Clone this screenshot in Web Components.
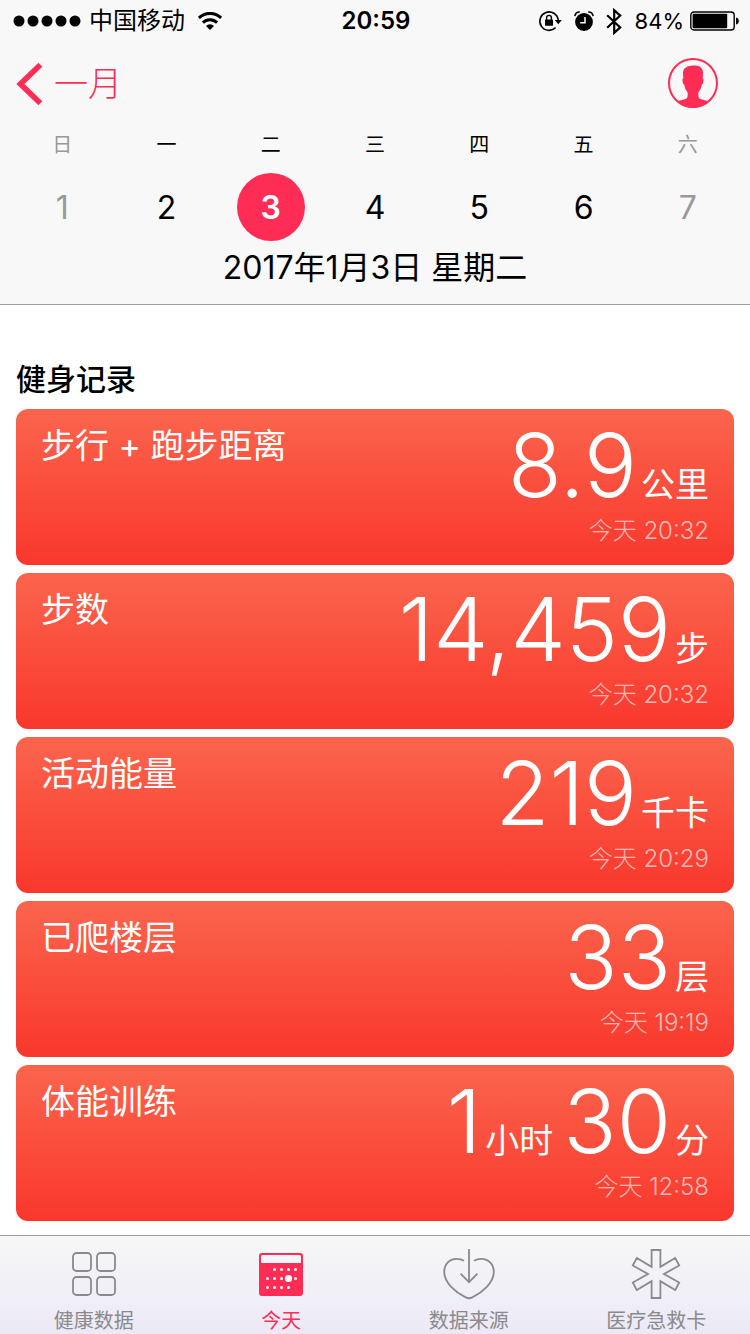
<!DOCTYPE html>
<html lang="zh-CN">
<head>
<meta charset="utf-8">
<meta name="viewport" content="width=device-width, initial-scale=1">
<title>健康</title>
<style>
  :root {
    --pink: #ff2d55;
    --grey: #8a8a8d;
    --bar: #f8f8f8;
    --line: #a0a0a2;
  }
  body {
    margin: 0;
    background: #fff;
    color: #000;
    font-family: Inter, "Noto Sans CJK SC", sans-serif;
  }
</style>
</head>
<body>
<health-app></health-app>

<script>
class StatusBar extends HTMLElement {
  constructor() {
    super();
    this.attachShadow({ mode: "open" });
    this.shadowRoot.innerHTML = `
      <style>
        :host {
          display: grid;
          grid-template-columns: 1fr auto 1fr;
          align-items: center;
          box-sizing: border-box;
          height: 40px;
          padding: 2px 11px 0 13px;
          font-size: 24px;
          line-height: 38px;
        }
        div { display: flex; align-items: center; }
        svg { display: block; flex: none; }
        .carrier { margin: 0 13px 0 8px; }
        .time { font-weight: 600; }
        .right { justify-content: flex-end; }
        .alarm { margin: 0 12px 0 11px; }
        .percent { margin: 0 6px 0 13px; font-size: 22px; }
      </style>
      <div>
        <svg width="68" height="12" viewBox="0 0 68 12">
          <circle cx="6" cy="6" r="5.5"/><circle cx="20" cy="6" r="5.5"/><circle cx="34" cy="6" r="5.5"/>
          <circle cx="48" cy="6" r="5.5"/><circle cx="62" cy="6" r="5.5"/>
        </svg>
        <span class="carrier">中国移动</span>
        <svg width="24" height="18" viewBox="0 0 24 18" fill="none" stroke="#000" stroke-width="3">
          <path d="M.9 6a15.700 15.700 0 0 1 22.200 0"/>
          <path d="M4.900 10.600a10 10 0 0 1 14.200 0"/>
          <path d="M12 18l-4-4.100a5.800 5.800 0 0 1 8 0z" fill="#000" stroke="none"/>
        </svg>
      </div>
      <span class="time">20:59</span>
      <div class="right">
        <svg width="25" height="22" viewBox="0 0 25 22">
          <path d="M17.6 17.6A9.2 9.2 0 1 1 20.2 10" fill="none" stroke="#000" stroke-width="1.6"/>
          <path d="M16.8 10h7l-3.5 4.2z"/>
          <rect x="7" y="9.6" width="8" height="6.2" rx=".6"/>
          <path d="M8.6 10V7.8a2.4 2.4 0 0 1 4.8 0V10" fill="none" stroke="#000" stroke-width="1.4"/>
        </svg>
        <svg class="alarm" width="20" height="22" viewBox="0 0 20 22">
          <circle cx="10" cy="12" r="8.9"/>
          <path d="M.9 6.2C1.2 3.4 3 1.9 5.8 2M19.1 6.2C18.8 3.4 17 1.9 14.2 2" fill="none" stroke="#000" stroke-width="1.6"/>
          <path d="M11 7v5.800H6.200" fill="none" stroke="#fff" stroke-width="1.500"/>
        </svg>
        <svg width="16" height="27" viewBox="0 0 16 27" fill="none" stroke="#000" stroke-width="2.200">
          <path d="M1.200 7.200l13 12.200-6 5.400V2.200l6 5.400-13 12.200"/>
        </svg>
        <span class="percent">84%</span>
        <svg width="49" height="20" viewBox="0 0 49 20">
          <rect x=".8" y="1" width="43.4" height="18" rx="3.2" fill="none" stroke="#000" stroke-width="1.4"/>
          <rect x="2.6" y="2.8" width="34.6" height="14.4" rx="1"/>
          <path d="M46 6.4c2 .4 2.8 1.8 2.8 3.6s-.8 3.2-2.8 3.6z"/>
        </svg>
      </div>
    `;
  }
}

class NavBar extends HTMLElement {
  constructor() {
    super();
    this.attachShadow({ mode: "open" });
    this.shadowRoot.innerHTML = `
      <style>
        :host {
          display: flex;
          justify-content: space-between;
          align-items: center;
          height: 88px;
          padding: 0 31px 0 16px;
        }
        button {
          display: flex;
          align-items: center;
          gap: 11px;
          padding: 0;
          border: 0;
          background: none;
          color: var(--pink);
          font: inherit;
          font-size: 34px;
          font-weight: 300;
          line-height: 46px;
          cursor: pointer;
        }
        svg { display: block; }
      </style>
      <button type="button">
        <svg width="27" height="44" viewBox="0 0 27 44" fill="none" stroke="currentColor" stroke-width="5.600">
          <path d="M24.400 2.800L4.400 22l20 19.200"/>
        </svg>
        <slot></slot>
      </button>
      <button type="button" aria-label="个人资料">
        <svg width="52" height="52" viewBox="0 0 52 52">
          <circle cx="26" cy="25" r="24" fill="none" stroke="currentColor" stroke-width="2"/>
          <path fill="currentColor" d="M26 7.500c5.500-.2 9.800 1.500 10 7 .1 2-.2 4-.3 6 1 .2 1 1.500.7 3-.3 1.700-.9 3-1.700 3.200-.4 3.300-1.400 5.300-3.200 7.500-.3 2.400-.3 4.300.5 5.800 1.300 1.800 6.500 2 9.900 3.500C38 47.500 32 50 26 50s-12-2.500-15.900-6.500c3.400-1.500 8.600-1.700 9.900-3.500.8-1.500.8-3.400.5-5.800-1.800-2.200-2.800-4.200-3.200-7.500-.8-.2-1.400-1.500-1.700-3.200-.3-1.500-.3-2.800.7-3-.1-2-.4-4-.3-6 .2-4.500 4.500-6.800 10-7z"/>
        </svg>
      </button>
    `;
  }
}

class WeekStrip extends HTMLElement {
  constructor() {
    super();
    this.attachShadow({ mode: "open" });
  }

  connectedCallback() {
    const names = ["日", "一", "二", "三", "四", "五", "六"];
    const selected = Number(this.getAttribute("selected"));
    const days = names.map((name, i) => {
      const weekend = i === 0 || i === 6 ? "weekend" : "";
      const current = i + 1 === selected ? `aria-current="date"` : "";
      return `
        <div class="day ${weekend}">
          <span>${name}</span>
          <button type="button" ${current}>${i + 1}</button>
        </div>`;
    }).join("");

    this.shadowRoot.innerHTML = `
      <style>
        :host { display: block; }
        .week {
          display: grid;
          grid-template-columns: repeat(7, 1fr);
          padding: 1px 10px 0;
        }
        .day {
          display: flex;
          flex-direction: column;
          align-items: center;
          gap: 12px;
          font-size: 20px;
          line-height: 32px;
        }
        .weekend { color: #999; }
        button {
          width: 68px;
          height: 68px;
          padding: 2px 0 0;
          border: 0;
          border-radius: 50%;
          background: none;
          color: inherit;
          font: inherit;
          font-size: 32px;
          cursor: pointer;
        }
        button[aria-current] {
          background: var(--pink);
          color: #fff;
          font-weight: 600;
        }
        p {
          margin: 0;
          padding: 5px 0 14px;
          font-size: 32px;
          line-height: 44px;
          text-align: center;
        }
      </style>
      <div class="week">${days}</div>
      <p><slot></slot></p>
    `;
  }
}

class MetricFigure extends HTMLElement {
  constructor() {
    super();
    this.attachShadow({ mode: "open" });
  }

  connectedCallback() {
    this.shadowRoot.innerHTML = `
      <style>
        :host {
          display: flex;
          align-items: baseline;
          gap: 4px;
        }
        .number {
          font-size: 88px;
          font-weight: 300;
          line-height: 88px;
        }
        .unit {
          font-size: 34px;
          line-height: 34px;
        }
      </style>
      <span class="number"><slot></slot></span>
      <span class="unit">${this.getAttribute("unit")}</span>
    `;
  }
}

class MetricCard extends HTMLElement {
  constructor() {
    super();
    this.attachShadow({ mode: "open" });
  }

  connectedCallback() {
    this.shadowRoot.innerHTML = `
      <style>
        :host {
          display: flex;
          justify-content: space-between;
          padding: 12px 25px;
          border-radius: 12px;
          background: linear-gradient(#fb654d, #f9372d);
          color: #fff;
        }
        h3 {
          margin: 0;
          font-size: 34px;
          font-weight: 400;
          line-height: 50px;
        }
        .reading {
          display: flex;
          flex-direction: column;
          align-items: flex-end;
        }
        .figures { display: flex; gap: 10px; }
        time {
          color: rgba(255, 255, 255, 0.65);
          font-size: 24px;
          font-weight: 300;
          line-height: 44px;
        }
      </style>
      <h3>${this.getAttribute("label")}</h3>
      <div class="reading">
        <div class="figures"><slot></slot></div>
        <time>${this.getAttribute("time")}</time>
      </div>
    `;
  }
}

class TabItem extends HTMLElement {
  constructor() {
    super();
    this.attachShadow({ mode: "open" });
  }

  connectedCallback() {
    this.shadowRoot.innerHTML = `
      <style>
        :host { display: block; color: var(--grey); }
        :host([active]) { color: var(--pink); }
        a {
          display: flex;
          flex-direction: column;
          align-items: center;
          gap: 11px;
          color: inherit;
          font-size: 20px;
          line-height: 20px;
          text-decoration: none;
        }
        svg { display: block; }
      </style>
      <a href="#${this.getAttribute("icon")}">
        <svg width="52" height="52" viewBox="0 0 52 52" fill="none" stroke="currentColor" stroke-width="1.8">
          ${TabItem.icons[this.getAttribute("icon")]}
        </svg>
        <slot></slot>
      </a>
    `;
  }
}

TabItem.icons = {
  data: `
    <rect x="5" y="5" width="18" height="18" rx="3.500"/>
    <rect x="29" y="5" width="18" height="18" rx="3.500"/>
    <rect x="5" y="29" width="18" height="18" rx="3.500"/>
    <rect x="29" y="29" width="18" height="18" rx="3.500"/>`,
  today: `
    <path fill="currentColor" stroke="none" fill-rule="evenodd" d="M7 5h38a3 3 0 0 1 3 3v37a3 3 0 0 1-3 3H7a3 3 0 0 1-3-3V8a3 3 0 0 1 3-3zM6 8.500V15h40V8.500A1.500 1.500 0 0 0 44.500 7h-37A1.500 1.500 0 0 0 6 8.500z"/>
    <g fill="#fff" stroke="none">
      <circle cx="19.500" cy="21.500" r="1.500"/><circle cx="26.500" cy="21.500" r="1.500"/><circle cx="33.500" cy="21.500" r="1.500"/><circle cx="40.500" cy="21.500" r="1.500"/>
      <circle cx="12.500" cy="30.500" r="1.500"/><circle cx="19.500" cy="30.500" r="1.500"/><circle cx="26.500" cy="30.500" r="1.500"/><circle cx="33.500" cy="30.500" r="3.600"/><circle cx="40.500" cy="30.500" r="1.500"/>
      <circle cx="12.500" cy="39.500" r="1.500"/><circle cx="19.500" cy="39.500" r="1.500"/><circle cx="26.500" cy="39.500" r="1.500"/><circle cx="33.500" cy="39.500" r="1.500"/>
    </g>`,
  sources: `
    <path d="M21 12.800C18.500 11.200 16 10.800 13.800 10.800 6 10.800 1.200 16.800 1.200 24c0 10.500 11.500 20.500 21.500 25.400 2.400 1.200 4.200 1.200 6.600 0C39.300 44.500 50.800 34.500 50.800 24c0-7.200-4.800-13.200-12.600-13.200-2.200 0-4.700.4-7.200 2"/>
    <path d="M26 1v33M17.600 25.600L26 34.200l8.400-8.600"/>`,
  medical: `
    <path d="M21.600 2h8.800v16.800l14.800-8.900 4 7.600L34 26l15.200 8.500-4 7.600-14.800-8.900V50h-8.800V33.200L6.800 42.100l-4-7.600L18 26 2.800 17.500l4-7.600 14.800 8.900z"/>`
};

class HealthApp extends HTMLElement {
  constructor() {
    super();
    this.attachShadow({ mode: "open" });
    this.shadowRoot.innerHTML = `
      <style>
        :host {
          display: flex;
          flex-direction: column;
          min-height: 100vh;
        }
        header {
          border-bottom: 1px solid var(--line);
          background: var(--bar);
        }
        main {
          flex: 1;
          display: flex;
          flex-direction: column;
          gap: 8px;
          padding: 52px 16px 14px;
        }
        h2 {
          margin: 0;
          font-size: 30px;
          font-weight: 500;
          line-height: 44px;
        }
        nav {
          display: grid;
          grid-template-columns: repeat(4, 1fr);
          padding: 12px 0 3px;
          border-top: 1px solid var(--line);
          background: linear-gradient(#f7f7f8, #ece9f6);
        }
      </style>
      <header>
        <status-bar></status-bar>
        <nav-bar>一月</nav-bar>
        <week-strip selected="3">2017年1月3日 星期二</week-strip>
      </header>
      <main>
        <h2>健身记录</h2>
        <metric-card label="步行 + 跑步距离" time="今天 20:32">
          <metric-figure unit="公里">8.9</metric-figure>
        </metric-card>
        <metric-card label="步数" time="今天 20:32">
          <metric-figure unit="步">14,459</metric-figure>
        </metric-card>
        <metric-card label="活动能量" time="今天 20:29">
          <metric-figure unit="千卡">219</metric-figure>
        </metric-card>
        <metric-card label="已爬楼层" time="今天 19:19">
          <metric-figure unit="层">33</metric-figure>
        </metric-card>
        <metric-card label="体能训练" time="今天 12:58">
          <metric-figure unit="小时">1</metric-figure>
          <metric-figure unit="分">30</metric-figure>
        </metric-card>
      </main>
      <nav>
        <tab-item icon="data">健康数据</tab-item>
        <tab-item icon="today" active>今天</tab-item>
        <tab-item icon="sources">数据来源</tab-item>
        <tab-item icon="medical">医疗急救卡</tab-item>
      </nav>
    `;
  }
}

customElements.define("status-bar", StatusBar);
customElements.define("nav-bar", NavBar);
customElements.define("week-strip", WeekStrip);
customElements.define("metric-figure", MetricFigure);
customElements.define("metric-card", MetricCard);
customElements.define("tab-item", TabItem);
customElements.define("health-app", HealthApp);
</script>
</body>
</html>
